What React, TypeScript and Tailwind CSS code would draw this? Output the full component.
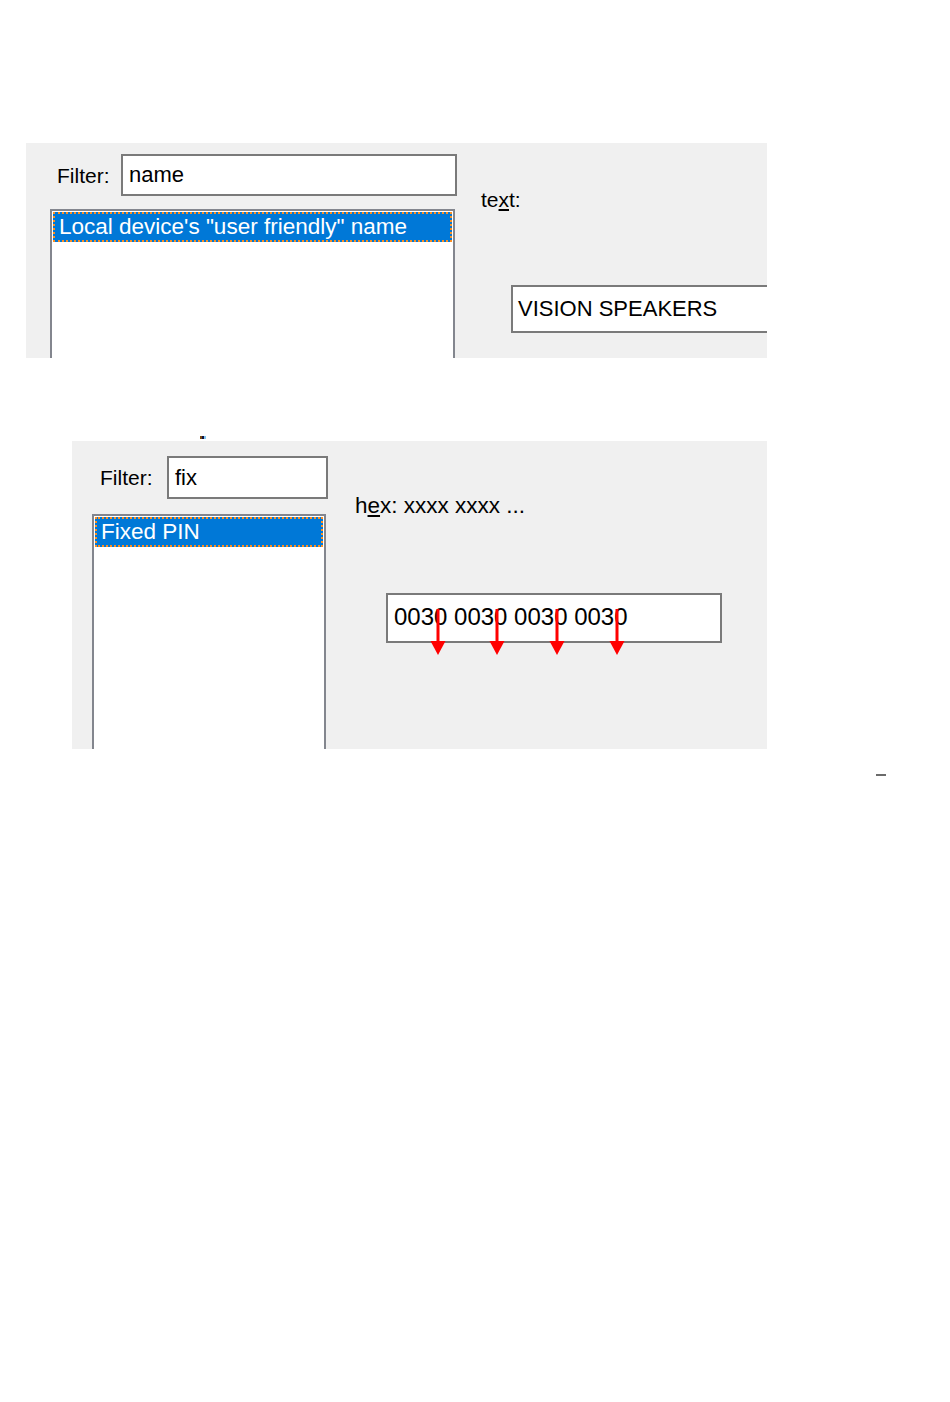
const font = "font-['Liberation_Sans',Arial,sans-serif]";

function SelectedItem({ label }: { label: string }) {
  return (
    <div className="m-px h-[30px] bg-[#0078d7] border-2 border-dotted border-[#ff8f1f] flex items-center pl-[4px]">
      <span className="text-white text-[22.5px] leading-none whitespace-nowrap">{label}</span>
    </div>
  );
}

function HexArrows() {
  const xs = [52, 111, 171, 231];
  return (
    <svg className="absolute left-0 top-0" width="336" height="70" viewBox="0 0 336 70">
      {xs.map((x) => (
        <g key={x} fill="#ff0000">
          <rect x={x - 1.5} y={16} width={3} height={33} />
          <polygon points={`${x - 7.5},48 ${x + 7.5},48 ${x},62`} />
        </g>
      ))}
    </svg>
  );
}

export default function App() {
  return (
    <div className={`${font} w-[950px] h-[1402px] bg-white pt-[143px] text-black`}>
      {/* first dialog crop */}
      <div className="ml-[26px] w-[741px] h-[215px] bg-[#f0f0f0] overflow-hidden flex">
        <div className="w-[431px] flex-shrink-0 pl-[24px] pt-[11px]">
          <div className="flex items-center pl-[7px]">
            <span className="w-[64px] text-[21px] leading-none">Filter:</span>
            <div className="w-[336px] h-[42px] border-2 border-[#7a7a7a] bg-white flex items-center pl-[6px]">
              <span className="text-[22px] leading-none">name</span>
            </div>
          </div>
          <div className="mt-[13px] w-[405px] h-[220px] border-2 border-[#83868e] bg-white">
            <SelectedItem label={'Local device\'s "user friendly" name'} />
          </div>
        </div>
        <div className="flex-1 pt-[46px] pl-[24px]">
          <div className="text-[21px] leading-[22px] h-[22px]">
            te<span className="underline underline-offset-2">x</span>t:
          </div>
          <div className="mt-[74px] ml-[30px] w-[300px] h-[48px] border-2 border-[#7a7a7a] bg-white flex items-center pl-[5px]">
            <span className="text-[22px] leading-none whitespace-nowrap">VISION SPEAKERS</span>
          </div>
        </div>
      </div>

      <div className="mt-[78px] ml-[200px] h-[3px] w-[6px] flex">
        <div className="w-[2px] bg-[#7a4a10]" />
        <div className="w-[2px] bg-[#101040]" />
        <div className="w-[2px] bg-[#7fc6f0]" />
      </div>

      {/* second dialog crop */}
      <div className="mt-[2px] ml-[72px] w-[695px] h-[308px] bg-[#f0f0f0] overflow-hidden flex">
        <div className="w-[256px] flex-shrink-0 pl-[20px] pt-[15px]">
          <div className="flex items-center pl-[8px]">
            <span className="w-[67px] text-[21px] leading-none">Filter:</span>
            <div className="w-[161px] h-[43px] border-2 border-[#7a7a7a] bg-white flex items-center pl-[6px]">
              <span className="text-[22px] leading-none">fix</span>
            </div>
          </div>
          <div className="mt-[15px] w-[234px] h-[260px] border-2 border-[#83868e] bg-white">
            <SelectedItem label="Fixed PIN" />
          </div>
        </div>
        <div className="flex-1 pt-[54px] pl-[27px]">
          <div className="text-[22.5px] leading-[22px] h-[22px] whitespace-nowrap">
            h<span className="underline underline-offset-2">e</span>x: xxxx xxxx ...
          </div>
          <div className="relative mt-[76px] ml-[31px] w-[336px] h-[50px] border-2 border-[#7a7a7a] bg-white flex items-center pl-[6px]">
            <span className="text-[24px] leading-none whitespace-nowrap -mt-[2px]">0030 0030 0030 0030</span>
            <div className="absolute -left-[2px] -top-[2px]">
              <HexArrows />
            </div>
          </div>
        </div>
      </div>

      <div className="mt-[25px] ml-[876px] w-[10px] h-[2px] bg-[#6b6b6b]" />
    </div>
  );
}
